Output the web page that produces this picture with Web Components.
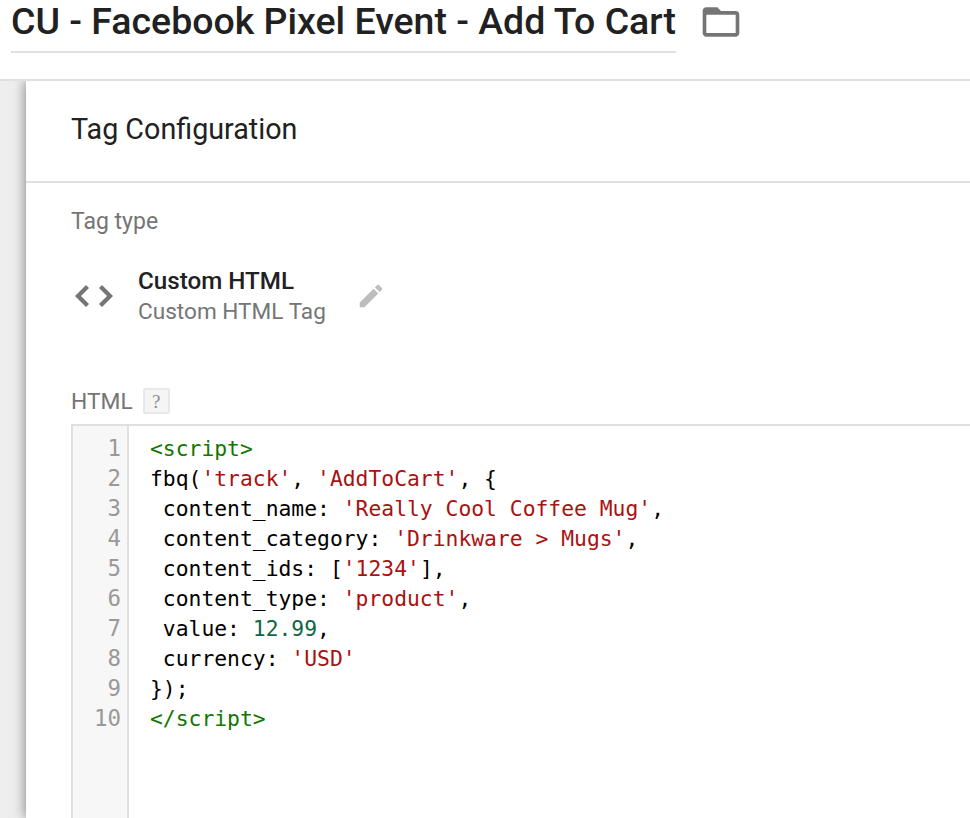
<!DOCTYPE html>
<html>
<head>
<meta charset="utf-8">
<title>Tag</title>
<style>
  html, body { margin: 0; height: 100%; overflow: hidden; background: #fff; }
  body { font-family: Roboto, "Liberation Sans", sans-serif; }
</style>
</head>
<body>
<tag-header>CU - Facebook Pixel Event - Add To Cart</tag-header>
<tag-page>
  <tag-card heading="Tag Configuration">
    <tag-type name="Custom HTML" sub="Custom HTML Tag"></tag-type>
    <code-box></code-box>
  </tag-card>
</tag-page>

<script>
class TagHeader extends HTMLElement {
  constructor() {
    super();
    this.attachShadow({mode: 'open'}).innerHTML = `
<style>
  :host { display: flex; height: 79px; border-bottom: 2px solid #e0e0e0; box-sizing: content-box; padding-left: 11px; align-items: flex-start; }
  .title { font-size: 37.48px; font-weight: 500; color: #212121; height: 51px; line-height: 42px; border-bottom: 2px solid #e0e0e0; white-space: nowrap; box-sizing: content-box; }
  svg { width: 44px; height: 44px; margin: 0 0 0 23px; display: block; }
</style>
<div class="title"><slot></slot></div>
<svg viewBox="0 0 24 24"><path fill="#757575" d="M20 6h-8l-2-2H4c-1.1 0-2 .9-2 2v12c0 1.1.9 2 2 2h16c1.1 0 2-.9 2-2V8c0-1.1-.9-2-2-2zm0 12H4V8h16v10z"/></svg>`;
  }
}

class TagPage extends HTMLElement {
  constructor() {
    super();
    this.attachShadow({mode: 'open'}).innerHTML = `
<style>
  :host { display: block; background: #eee; padding-left: 26px; height: 737px; overflow: hidden; }
</style>
<slot></slot>`;
  }
}

class TagCard extends HTMLElement {
  constructor() {
    super();
    this.attachShadow({mode: 'open'}).innerHTML = `
<style>
  :host { display: block; background: #fff; height: 100%; box-shadow: 0 0 12px rgba(0,0,0,.5); }
  .head { height: 100px; box-sizing: content-box; padding-left: 45px; font-size: 28.7px; line-height: 96px; color: #212121; border-bottom: 2px solid #e0e0e0; }
  .body { padding: 27px 0 0 45px; }
</style>
<div class="head"></div>
<div class="body"><slot></slot></div>`;
    this.shadowRoot.querySelector('.head').textContent = this.getAttribute('heading');
  }
}

class TagType extends HTMLElement {
  constructor() {
    super();
    this.attachShadow({mode: 'open'}).innerHTML = `
<style>
  :host { display: block; }
  .label { font-size: 23px; line-height: 24px; color: #757575; }
  .row { display: flex; align-items: center; margin-top: 32px; height: 62px; }
  .brackets { width: 38px; height: 22px; margin: -2px 0 0 4px; display: block; }
  .text { margin-left: 25px; }
  .name { font-size: 24.2px; font-weight: 500; line-height: 30px; color: #212121; }
  .sub { font-size: 22.6px; line-height: 32px; color: #757575; }
  .edit { width: 30px; height: 30px; margin: -3px 0 0 30px; display: block; }
</style>
<div class="label">Tag type</div>
<div class="row">
  <svg class="brackets" viewBox="0 0 38 22"><path fill="#757575" d="M11 0L0 11l11 11 3-3-8-8 8-8zM27 0l11 11-11 11-3-3 8-8-8-8z"/></svg>
  <div class="text"><div class="name"></div><div class="sub"></div></div>
  <svg class="edit" viewBox="0 0 24 24"><path fill="#bdbdbd" d="M3 17.25V21h3.75L17.81 9.94l-3.75-3.75L3 17.25zM20.71 7.04c.39-.39.39-1.02 0-1.41l-2.34-2.34c-.39-.39-1.02-.39-1.41 0l-1.83 1.83 3.75 3.75 1.83-1.83z"/></svg>
</div>`;
    this.shadowRoot.querySelector('.name').textContent = this.getAttribute('name');
    this.shadowRoot.querySelector('.sub').textContent = this.getAttribute('sub');
  }
}

const LINES = [
  [['tag', '<script>']],
  [['', 'fbq('], ['str', "'track'"], ['', ', '], ['str', "'AddToCart'"], ['', ', {']],
  [['', ' content_name: '], ['str', "'Really Cool Coffee Mug'"], ['', ',']],
  [['', ' content_category: '], ['str', "'Drinkware > Mugs'"], ['', ',']],
  [['', ' content_ids: ['], ['str', "'1234'"], ['', '],']],
  [['', ' content_type: '], ['str', "'product'"], ['', ',']],
  [['', ' value: '], ['num', '12.99'], ['', ',']],
  [['', ' currency: '], ['str', "'USD'"]],
  [['', '});']],
  [['tag', '</' + 'script>']]
];

class CodeBox extends HTMLElement {
  constructor() {
    super();
    this.attachShadow({mode: 'open'}).innerHTML = `
<style>
  :host { display: block; margin-top: 59px; }
  .label { display: flex; align-items: center; height: 28px; font-size: 22.8px; line-height: 30px; color: #757575; }
  .label b { font-weight: 400; padding-top: 2px; }
  .help { width: 27px; height: 26px; margin-left: 10px; box-sizing: border-box; border: 2px solid #e8e8e8; border-radius: 2px; background: #f5f5f5; color: #8a8a8a; font: 19px/23px "Liberation Serif", serif; text-align: center; }
  .editor { display: flex; margin-top: 9px; height: 400px; border-top: 2px solid #e0e0e0; border-left: 2px solid #e0e0e0; font: 21.35px/30px "DejaVu Sans Mono", monospace; color: #000; }
  .gutter { width: 54px; flex: none; box-sizing: border-box; padding: 7px 6px 0 0; background: #f7f7f7; text-align: right; color: #999; font-size: 22.4px; }
  .sep { width: 2px; flex: none; background: #e0e0e0; }
  .code { padding: 8px 0 0 21px; white-space: pre; }
  .tag { color: #170; }
  .str { color: #a11; }
  .num { color: #164; }
</style>
<div class="label"><b>HTML</b><span class="help">?</span></div>
<div class="editor"><div class="gutter"></div><div class="sep"></div><div class="code"></div></div>`;
    const gutter = this.shadowRoot.querySelector('.gutter');
    const code = this.shadowRoot.querySelector('.code');
    LINES.forEach((parts, i) => {
      const n = document.createElement('div');
      n.textContent = i + 1;
      gutter.appendChild(n);
      const line = document.createElement('div');
      parts.forEach(([cls, text]) => {
        const span = document.createElement('span');
        if (cls) span.className = cls;
        span.textContent = text;
        line.appendChild(span);
      });
      code.appendChild(line);
    });
  }
}

customElements.define('tag-header', TagHeader);
customElements.define('tag-page', TagPage);
customElements.define('tag-card', TagCard);
customElements.define('tag-type', TagType);
customElements.define('code-box', CodeBox);
</script>
</body>
</html>
